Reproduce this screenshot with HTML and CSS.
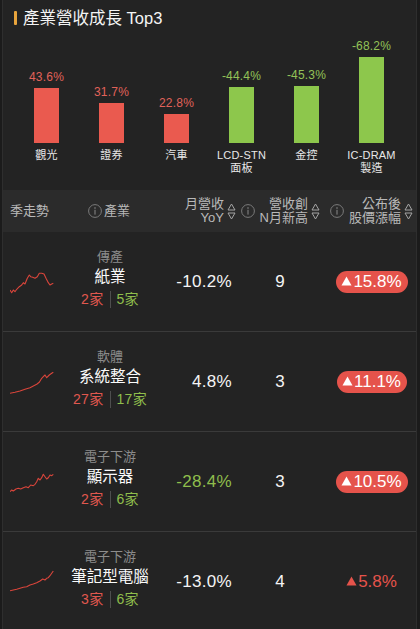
FILE: index.html
```html
<!DOCTYPE html>
<html lang="zh-Hant">
<head>
<meta charset="utf-8">
<title>產業營收成長 Top3</title>
<link rel="stylesheet" href="styles.css">
</head>
<body>
<svg width="0" height="0" class="defs">
  <defs>
    <symbol id="sort" viewBox="0 0 9 17">
      <path d="M4.5 1 L8 7 H1 Z" fill="none" stroke="#a5a5a5" stroke-width="1" stroke-linejoin="round"/>
      <path d="M1 10 H8 L4.5 16 Z" fill="none" stroke="#a5a5a5" stroke-width="1" stroke-linejoin="round"/>
    </symbol>
    <symbol id="info" viewBox="0 0 14 14">
      <circle cx="7" cy="7" r="6.4" fill="none" stroke="#7a7a7a" stroke-width="1"/>
      <circle cx="7" cy="4" r="0.8" fill="#8a8a8a"/>
      <rect x="6.5" y="5.8" width="1" height="4.8" fill="#8a8a8a"/>
    </symbol>
    <symbol id="tri" viewBox="0 0 12 11">
      <path d="M6 0.5 L11.5 10.5 H0.5 Z" fill="currentColor"/>
    </symbol>
  </defs>
</svg>
<div class="app">
  <section class="top">
    <h2 class="title"><span class="mark"></span>產業營收成長 Top3</h2>
    <div class="chart">
      <div class="col up">
        <div class="plot"><span class="pct">43.6%</span><div class="bar" style="height:55px"></div></div>
        <div class="name">觀光</div>
      </div>
      <div class="col up">
        <div class="plot"><span class="pct">31.7%</span><div class="bar" style="height:40px"></div></div>
        <div class="name">證券</div>
      </div>
      <div class="col up">
        <div class="plot"><span class="pct">22.8%</span><div class="bar" style="height:29px"></div></div>
        <div class="name">汽車</div>
      </div>
      <div class="col down">
        <div class="plot"><span class="pct">-44.4%</span><div class="bar" style="height:56px"></div></div>
        <div class="name">LCD-STN<br>面板</div>
      </div>
      <div class="col down">
        <div class="plot"><span class="pct">-45.3%</span><div class="bar" style="height:57px"></div></div>
        <div class="name">金控</div>
      </div>
      <div class="col down">
        <div class="plot"><span class="pct">-68.2%</span><div class="bar" style="height:86px"></div></div>
        <div class="name">IC-DRAM<br>製造</div>
      </div>
    </div>
  </section>

  <div class="thead">
    <div class="th th-trend">季走勢</div>
    <div class="th th-ind"><svg class="info"><use href="#info"/></svg><span>產業</span></div>
    <div class="th th-r"><span class="lbl">月營收<br>YoY</span><svg class="sort"><use href="#sort"/></svg></div>
    <div class="th th-r"><svg class="info"><use href="#info"/></svg><span class="lbl">營收創<br>N月新高</span><svg class="sort"><use href="#sort"/></svg></div>
    <div class="th th-r th-last"><svg class="info"><use href="#info"/></svg><span class="lbl">公布後<br>股價漲幅</span><svg class="sort"><use href="#sort"/></svg></div>
  </div>

  <div class="row">
    <div class="trend"><svg class="spark" viewBox="0 0 45 25"><polyline points="0,20 1.7,22.7 3.3,20 5,21.7 6.7,19.3 9.3,16.7 11.7,15 13.3,12.7 15,14 17.3,8.3 19.3,5 20.7,6.7 22.7,7.3 25,8.3 27.3,6.7 29.3,3.3 31.7,3.3 34,4 36,8.3 38.3,12.7 40,15 41.7,14 43.3,13.3"/></svg></div>
    <div class="ind"><div class="cat">傳產</div><div class="nm">紙業</div><div class="cnt"><span class="r">2家</span><i class="sep"></i><span class="g">5家</span></div></div>
    <div class="yoy">-10.2%</div>
    <div class="num">9</div>
    <div class="chg"><span class="badge"><svg class="tri"><use href="#tri"/></svg>15.8%</span></div>
  </div>

  <div class="row">
    <div class="trend"><svg class="spark" viewBox="0 0 45 25"><polyline points="0,23.3 5,22.3 10,21 15,19.3 20,17.7 23.3,16 26.7,14.3 29.3,12.3 31.7,8.3 33.3,6.7 35,5 36.7,7.7 39.3,5 41.7,3.3 43.3,2.3"/></svg></div>
    <div class="ind"><div class="cat">軟體</div><div class="nm">系統整合</div><div class="cnt"><span class="r">27家</span><i class="sep"></i><span class="g">17家</span></div></div>
    <div class="yoy">4.8%</div>
    <div class="num">3</div>
    <div class="chg"><span class="badge"><svg class="tri"><use href="#tri"/></svg>11.1%</span></div>
  </div>

  <div class="row">
    <div class="trend"><svg class="spark" viewBox="0 0 45 25"><polyline points="0,21.7 1.7,20 3.3,21 6,19 8.3,18.3 10.7,19 13.3,17.7 16,16.7 18.3,17.7 20.7,15 23.3,15.7 25,14.3 26.7,11.7 28.3,8.3 30,10 31.7,7.7 33.3,4.3 35,6.7 36.7,9 38.3,7.7 40,5 41.7,5.7 43.3,4.3"/></svg></div>
    <div class="ind"><div class="cat">電子下游</div><div class="nm">顯示器</div><div class="cnt"><span class="r">2家</span><i class="sep"></i><span class="g">6家</span></div></div>
    <div class="yoy neg">-28.4%</div>
    <div class="num">3</div>
    <div class="chg"><span class="badge"><svg class="tri"><use href="#tri"/></svg>10.5%</span></div>
  </div>

  <div class="row">
    <div class="trend"><svg class="spark" viewBox="0 0 45 25"><polyline points="0,20.7 3.3,20 6.7,19.3 10,18.3 13.3,17.3 16.7,16.7 20,15 23.3,14 26.7,12.7 30,11 32.7,9 35,10 36.7,8.3 38.3,7.7 40,5.7 41.7,3.3 43.3,1"/></svg></div>
    <div class="ind"><div class="cat">電子下游</div><div class="nm">筆記型電腦</div><div class="cnt"><span class="r">3家</span><i class="sep"></i><span class="g">6家</span></div></div>
    <div class="yoy">-13.0%</div>
    <div class="num">4</div>
    <div class="chg"><span class="badge plain"><svg class="tri"><use href="#tri"/></svg>5.8%</span></div>
  </div>
</div>
</body>
</html>
```
FILE: styles.css
```css
* { box-sizing: border-box; }
html, body { margin: 0; padding: 0; }
body {
  background: #1b1b1b;
  color: #fff;
  font-family: "Liberation Sans", "Noto Sans CJK TC", sans-serif;
  height: 629px;
  overflow: hidden;
}
.defs { position: absolute; width: 0; height: 0; }

.app {
  margin: 0 3px 0 2px;
  background: #232323;
  border-left: 1px solid #2e2e2e;
  border-right: 1px solid #2e2e2e;
  min-height: 629px;
}

/* ---------- top chart ---------- */
.title {
  margin: 0;
  padding: 8px 0 0 11px;
  height: 36px;
  display: flex;
  align-items: flex-start;
  font-weight: normal;
  font-size: 16.5px;
  line-height: 20px;
  color: #f4f4f4;
  gap: 6px;
}
.mark {
  width: 3px;
  height: 14px;
  margin-top: 3px;
  background: #e8a43c;
  border-radius: 1px;
}
.chart {
  display: grid;
  grid-template-columns: repeat(6, 65px);
  padding: 0 0 15px 11px;
  align-items: start;
}
.col { display: flex; flex-direction: column; align-items: center; }
.plot {
  height: 107px;
  display: flex;
  flex-direction: column;
  justify-content: flex-end;
  align-items: center;
}
.pct {
  font-size: 12px;
  line-height: 14px;
  margin-bottom: 4px;
  letter-spacing: 0.2px;
}
.bar { width: 25px; }
.up .pct { color: #e0625a; }
.up .bar { background: #ea5a4f; }
.down .pct { color: #93c257; }
.down .bar { background: #8dc74c; }
.name {
  margin-top: 6px;
  font-size: 11px;
  line-height: 13px;
  color: #e8e8e8;
  text-align: center;
  letter-spacing: 0.2px;
}

/* ---------- table ---------- */
.thead, .row {
  display: grid;
  grid-template-columns: 72px 70px 93px 84px 1fr;
}
.thead {
  height: 42px;
  background: #2b2b2b;
  align-items: center;
  font-size: 13px;
  line-height: 14px;
  color: #b9b9b9;
}
.th { display: flex; align-items: center; }
.th-trend { padding-left: 7px; }
.th-ind { padding-left: 13px; gap: 2px; }
.th-r { justify-content: flex-end; padding-right: 2px; gap: 4px; }
.th-last { padding-right: 3px; }
.lbl { text-align: right; }
.th-r .lbl { margin-right: -1px; }
.info { width: 14px; height: 14px; flex: none; }
.th-r .info { margin-right: 1px; }
.sort { width: 9px; height: 17px; flex: none; }

.row {
  height: 100px;
  align-items: center;
  border-top: 1px solid #3a3a3a;
}
.thead + .row { border-top: 0; height: 99px; }

.trend { padding-left: 7px; display: flex; align-items: center; padding-top: 1px; }
.spark { width: 45px; height: 25px; }
.spark polyline {
  fill: none;
  stroke: #d9453b;
  stroke-width: 1.1;
  stroke-linejoin: round;
}

.ind {
  display: flex;
  flex-direction: column;
  align-items: center;
  padding-bottom: 5px;
  white-space: nowrap;
}
.cat { font-size: 13px; line-height: 20px; color: #8c8c8c; }
.nm { font-size: 15.5px; line-height: 20px; color: #fafafa; }
.cnt {
  display: flex;
  align-items: center;
  gap: 6px;
  font-size: 14px;
  line-height: 24px;
  letter-spacing: 0.3px;
}
.r { color: #e0584f; }
.g { color: #8fbe4c; }
.sep { display: block; width: 1px; height: 17px; background: #4e4e4e; }

.yoy {
  text-align: right;
  padding-right: 6px;
  font-size: 17px;
  letter-spacing: 0.3px;
  color: #f5f5f5;
}
.yoy.neg { color: #8fbe4c; }
.num { text-align: center; font-size: 17px; color: #f5f5f5; }
.chg { display: flex; justify-content: center; padding-left: 6px; }
.badge {
  display: inline-flex;
  align-items: center;
  height: 22px;
  padding: 0 6px 0 5px;
  border-radius: 11px;
  background: #e5534b;
  color: #fff;
  font-size: 17px;
  gap: 1px;
}
.badge.plain { background: none; color: #e5534b; }
.tri { width: 11px; height: 10px; margin-top: -1px; color: currentColor; }
```
